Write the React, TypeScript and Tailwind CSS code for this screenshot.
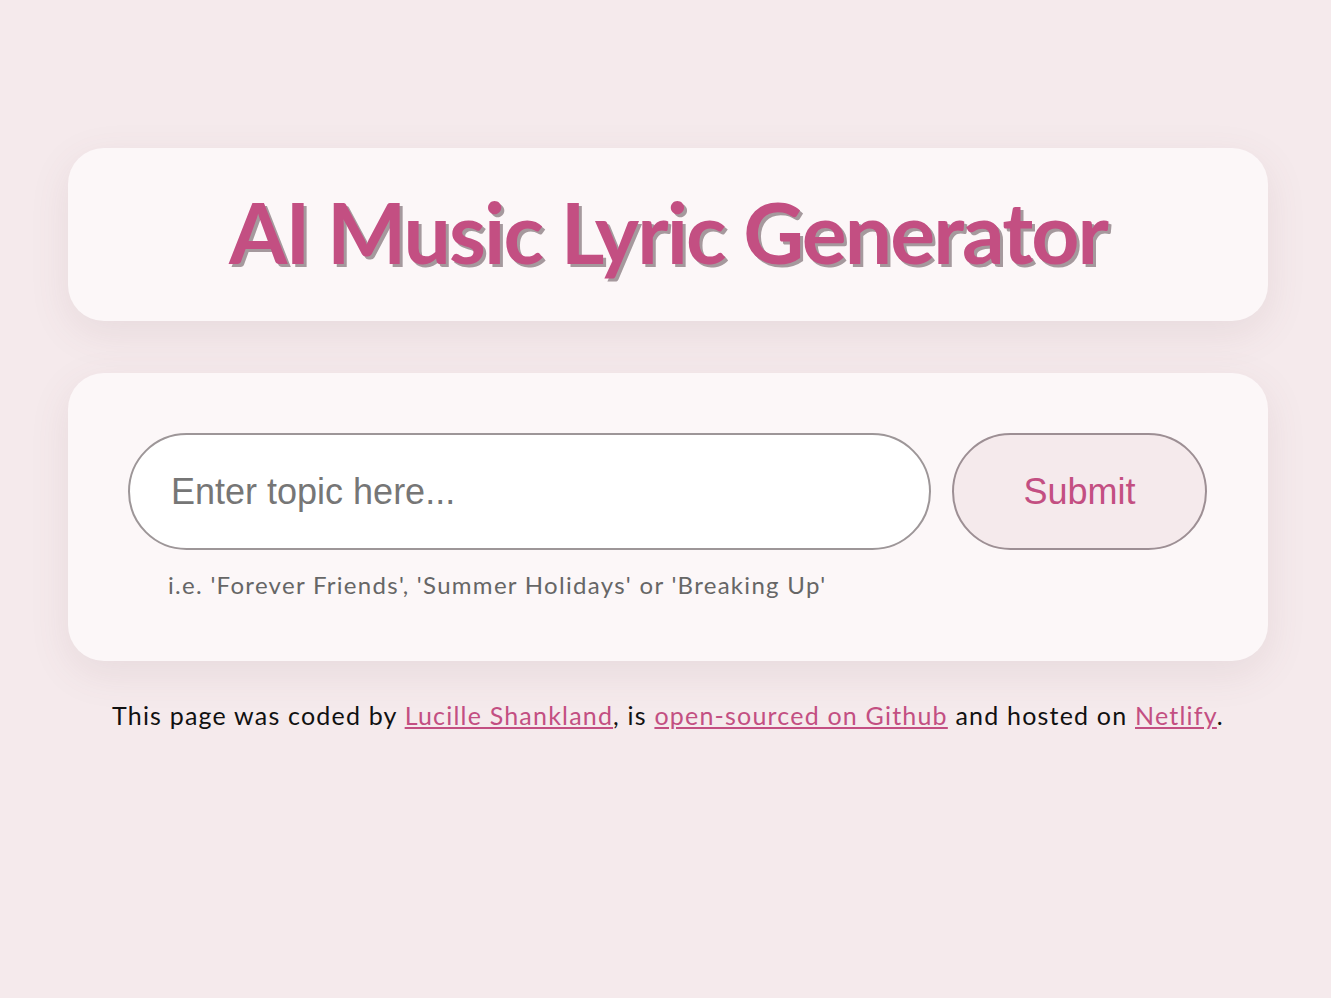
import React from "react";

export default function App() {
  return (
    <div className="min-h-[998px] w-full bg-[#f5eaec] pt-[148px] font-['Lato','Noto_Sans',sans-serif]">
      <div className="ml-[68px] w-[1200px]">
        <div className="flex h-[173px] items-center justify-center rounded-[36px] bg-[#fcf7f8] shadow-[0_12px_40px_rgba(120,80,90,0.10)]">
          <h1 className="pb-[6px] text-[84px] font-bold leading-none tracking-[-1.9px] text-[#c34f82] [text-shadow:3px_3px_0_#a5999d]">
            AI Music Lyric Generator
          </h1>
        </div>
        <div className="mt-[52px] rounded-[36px] bg-[#fcf7f8] px-[60px] pt-[60px] pb-[60px] shadow-[0_12px_40px_rgba(120,80,90,0.10)]">
          <div className="flex gap-[21px]">
            <input
              type="text"
              placeholder="Enter topic here..."
              className="h-[117px] w-[803px] rounded-full border-2 border-[#9d9698] bg-white pl-[41px] font-['Liberation_Sans',Arial,sans-serif] text-[36px] text-[#333] outline-none placeholder:text-[#767676]"
            />
            <button className="h-[117px] w-[255px] rounded-full border-2 border-[#9d8f94] bg-[#f5eaec] font-['Liberation_Sans',Arial,sans-serif] text-[36px] text-[#c34f82]">
              Submit
            </button>
          </div>
          <p className="mt-[19px] pl-[40px] text-[24px] leading-[32px] tracking-[1.3px] text-[#666]">
            i.e. 'Forever Friends', 'Summer Holidays' or 'Breaking Up'
          </p>
        </div>
        <p className="mt-[36px] text-center text-[25px] leading-[36px] tracking-[1.2px] text-[#111]">
          This page was coded by{" "}
          <a href="#" className="text-[#c34f82] underline">Lucille Shankland</a>, is{" "}
          <a href="#" className="text-[#c34f82] underline">open-sourced on Github</a> and hosted on{" "}
          <a href="#" className="text-[#c34f82] underline">Netlify</a>.
        </p>
      </div>
    </div>
  );
}
